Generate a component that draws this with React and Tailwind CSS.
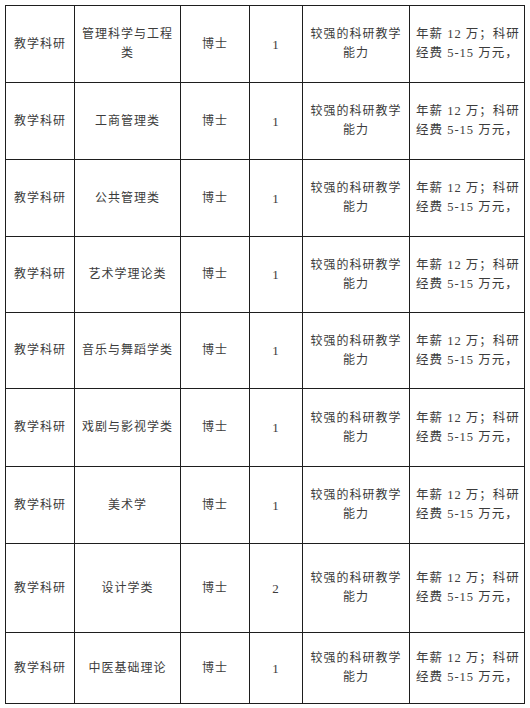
import React from "react";

const rows = [
  { major: "管理科学与工程类", count: "1", h: "h-[77px]" },
  { major: "工商管理类", count: "1", h: "h-[77px]" },
  { major: "公共管理类", count: "1", h: "h-[77px]" },
  { major: "艺术学理论类", count: "1", h: "h-[76px]" },
  { major: "音乐与舞蹈学类", count: "1", h: "h-[76px]" },
  { major: "戏剧与影视学类", count: "1", h: "h-[78px]" },
  { major: "美术学", count: "1", h: "h-[77px]" },
  { major: "设计学类", count: "2", h: "h-[89px]" },
  { major: "中医基础理论", count: "1", h: "h-[71px]" },
];

const cell = "border-[1.5px] border-[#1e1e1e] align-middle";

const App = () => {
  return (
    <div className="w-[530px] h-[708px] bg-white pt-[5px] pl-[5px] overflow-hidden">
      <table
        className="table-fixed border-collapse w-[519px] text-[12px] leading-[19px] tracking-[1px] text-[#3c3c3c]"
        style={{ fontFamily: '"Liberation Serif", "Noto Sans CJK SC", serif' }}
      >
        <colgroup>
          <col className="w-[69px]" />
          <col className="w-[106px]" />
          <col className="w-[69px]" />
          <col className="w-[53px]" />
          <col className="w-[107px]" />
          <col className="w-[115px]" />
        </colgroup>
        <tbody>
          {rows.map((r, i) => (
            <tr key={i} className={r.h}>
              <td className={`${cell} text-center px-1`}>教学科研</td>
              <td className={`${cell} text-center px-[6px]`}>{r.major}</td>
              <td className={`${cell} text-center`}>博士</td>
              <td className={`${cell} text-center text-[13px]`}>{r.count}</td>
              <td className={`${cell} text-center px-[6px]`}>
                较强的科研教学
                <br />
                能力
              </td>
              <td className={`${cell} text-left pl-[6px] pr-1 text-[12.5px]`}>
                年薪 12 万；科研
                <br />
                经费 5-15 万元，
              </td>
            </tr>
          ))}
        </tbody>
      </table>
    </div>
  );
};

export default App;
